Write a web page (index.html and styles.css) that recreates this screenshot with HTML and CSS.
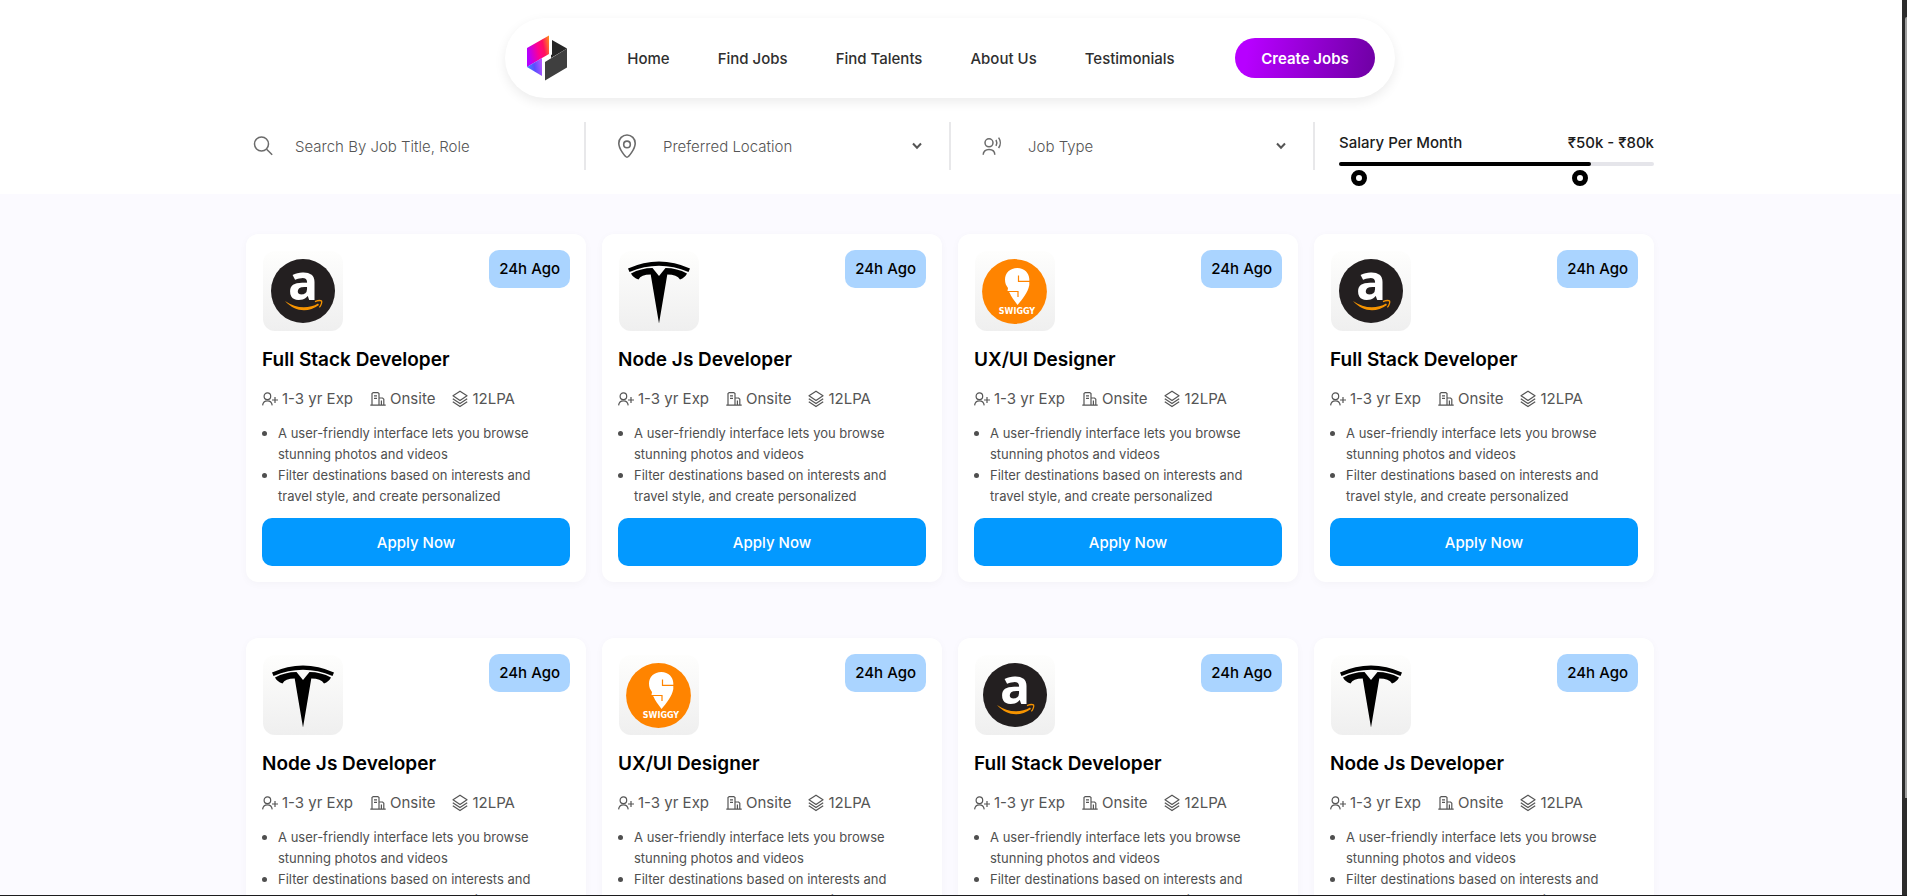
FILE: index.html
```html
<!DOCTYPE html>
<html lang="en">
<head>
<meta charset="utf-8">
<meta name="viewport" content="width=device-width, initial-scale=1">
<title>Find Jobs</title>
<link rel="stylesheet" href="styles.css">
</head>
<body>
<svg class="sprite" aria-hidden="true">
  <symbol id="i-exp" viewBox="0 0 16 16">
    <g fill="none" stroke="currentColor" stroke-width="1.2"><circle cx="5.4" cy="5.2" r="3.3"/><path d="M.6 14.4c.3-3 2-4.600 4.800-4.600s4.500 1.600 4.800 4.600M13 6v6M10 9h6"/></g>
  </symbol>
  <symbol id="i-site" viewBox="0 0 16 16">
    <g fill="none" stroke="currentColor" stroke-width="1.200"><path d="M.3 14.200h15.400M2 14V2.600L3.200 1.600h4.600L9 2.600V14M9 7h3.600l1.200 1.200V14M4 4.800h3M4 7.400h3M11.400 9.500v4.500"/></g>
  </symbol>
  <symbol id="i-pay" viewBox="0 0 16 18">
    <g fill="none" stroke="currentColor" stroke-width="1.200" stroke-linejoin="round"><path d="M8 1.200 15 5.800 8 10.400 1 5.800ZM.8 8.800 8 13.600l7.200-4.800M.8 11.800 8 16.600l7.200-4.800"/></g>
  </symbol>
  <symbol id="i-down" viewBox="0 0 10 8"><path d="M1 1.500 5 5.800 9 1.500" fill="none" stroke="currentColor" stroke-width="2"/></symbol>
</svg>
<div class="window">
  <div class="page">
    <header class="top">
      <nav class="nav" aria-label="Main">
        <svg class="nav-logo" viewBox="0 0 40 46" role="img" aria-label="Logo">
          <defs>
            <linearGradient id="g-warm" x1="0" y1="0.4" x2="1" y2="0.1">
              <stop offset="0" stop-color="#b400ff"/><stop offset="0.45" stop-color="#ff0090"/><stop offset="0.7" stop-color="#ff1060"/><stop offset="1" stop-color="#ff8a1c"/>
            </linearGradient>
            <linearGradient id="g-cool" x1="0" y1="0.6" x2="1" y2="0.4">
              <stop offset="0" stop-color="#3f8cff"/><stop offset="0.5" stop-color="#5a4cff"/><stop offset="1" stop-color="#b455ff"/>
            </linearGradient>
          </defs>
          <path d="M0 13 22 .5V19L15 23 0 32Z" fill="url(#g-warm)"/>
          <path d="M0 32 15 23V41Z" fill="url(#g-cool)"/>
          <path d="M25 5 40 13.500 24 23V20L25 19.500Z" fill="#262626"/>
          <path d="M40 13.500V32.500L18 45.500V27Z" fill="#3f3f3f"/>
        </svg>
        <div class="nav-links">
          <a href="#">Home</a><a href="#">Find Jobs</a><a href="#">Find Talents</a><a href="#">About Us</a><a href="#">Testimonials</a>
        </div>
        <button class="create" type="button">Create Jobs</button>
      </nav>
      <form class="filters">
        <label class="filter">
          <svg class="f-icon" viewBox="0 0 24 24" aria-hidden="true"><g fill="none" stroke="currentColor" stroke-width="1.500"><circle cx="10.500" cy="10" r="7"/><path d="m15.600 15.200 5.600 5.600"/></g></svg>
          <input class="f-text" type="text" placeholder="Search By Job Title, Role" aria-label="Search By Job Title, Role">
        </label>
        <label class="filter">
          <svg class="f-icon" viewBox="0 0 24 24" aria-hidden="true"><g fill="none" stroke="currentColor" stroke-width="1.600"><path d="M12 23.200C10.500 23.200 3.800 15 3.800 9.200a8.200 8.200 0 0 1 16.400 0C20.200 15 13.500 23.200 12 23.200Z"/><circle cx="12" cy="10.400" r="3.300"/></g></svg>
          <select class="f-text" aria-label="Preferred Location"><option>Preferred Location</option></select>
          <svg class="f-arrow" aria-hidden="true"><use href="#i-down"/></svg>
        </label>
        <label class="filter">
          <svg class="f-icon" viewBox="0 0 24 24" aria-hidden="true"><g fill="none" stroke="currentColor" stroke-width="1.500"><circle cx="9" cy="8.800" r="4"/><path d="M3.200 20.800c0-3.500 2.400-5.300 5.800-5.300s5.800 1.800 5.800 5.300M16 5.800c1 1.800 1 4.200 0 6M18.600 3.600c2.200 3 2.200 7.400 0 10.400"/></g></svg>
          <select class="f-text" aria-label="Job Type"><option>Job Type</option></select>
          <svg class="f-arrow" aria-hidden="true"><use href="#i-down"/></svg>
        </label>
        <div class="salary">
          <div class="salary-head"><span>Salary Per Month</span><span>₹50k - ₹80k</span></div>
          <div class="track"><div class="fill"></div></div>
          <div class="thumbs">
            <input type="range" min="0" max="100" value="4" aria-label="Minimum salary">
            <input type="range" min="0" max="100" value="78" aria-label="Maximum salary">
          </div>
        </div>
      </form>
    </header>
    <main class="jobs" id="jobs"></main>
  </div>
  <div class="scrollbar" aria-hidden="true"><div class="scroll-thumb"></div></div>
</div>
<script src="jobs.js"></script>
</body>
</html>
```
FILE: jobs.js
```js
const brands = {
  amazon: {
    role: "Full Stack Developer",
    logo: `<circle cx="40" cy="40" r="32" fill="#231f20"/>
      <text class="logo-a" x="40" y="49" text-anchor="middle">a</text>
      <path d="M22 50C33 58 46 58 55 52.500L56 54C45 62 32 61 22 50Z" fill="#f79400"/>
      <path d="M52 50.600c3-1.400 6-1.200 6.600-.6.500.8-.2 4.200-2.200 6.400" fill="none" stroke="#f79400" stroke-width="1.300"/>`
  },
  tesla: {
    role: "Node Js Developer",
    logo: `<path d="M9 17.500Q40 3.500 71 17.500L69.500 21Q40 8.500 10.500 21Z"/>
      <path d="M12 22.500Q22 17 33.500 17L40 25 46.500 17Q58 17 68 22.500 66 26.500 61 28.500 58 23.500 48.300 23.500L40 72.500 31.700 23.500Q22 23.500 19.500 28.500 14 26.500 12 22.500Z"/>`
  },
  swiggy: {
    role: "UX/UI Designer",
    logo: `<circle cx="39.500" cy="40.500" r="32.400" fill="#ff8400"/>
      <path d="M42.500 54C39 49 36 45.500 34.500 41.500L32.500 40 33 37C31 34.500 30 32 30 28.500 30 22 35 17 42.300 17S54 22 54.300 28V34C53 41.500 47.500 48 42.500 54Z" fill="#fff"/>
      <path d="M43.500 24.500V30.300H56M32 40.500H43V46" fill="none" stroke="#ff8400" stroke-width="1.200"/>
      <text class="logo-word" x="42" y="63" text-anchor="middle">SWIGGY</text>`
  }
};
const order = ["amazon", "tesla", "swiggy", "amazon", "tesla", "swiggy", "amazon", "tesla"];

document.getElementById("jobs").innerHTML = order.map((name) => `
  <article class="card">
    <div class="card-top">
      <svg class="tile" viewBox="0 0 80 80" role="img" aria-label="${name}">${brands[name].logo}</svg>
      <span class="age">24h Ago</span>
    </div>
    <h2 class="role">${brands[name].role}</h2>
    <div class="meta">
      <span><svg aria-hidden="true"><use href="#i-exp"/></svg>1-3 yr Exp</span>
      <span><svg aria-hidden="true"><use href="#i-site"/></svg>Onsite</span>
      <span><svg class="tall" aria-hidden="true"><use href="#i-pay"/></svg>12LPA</span>
    </div>
    <ul class="points">
      <li>A user-friendly interface lets you browse stunning photos and videos</li>
      <li>Filter destinations based on interests and travel style, and create personalized</li>
    </ul>
    <button class="apply" type="button">Apply Now</button>
  </article>`).join("");
```
FILE: styles.css
```css
*, *::before, *::after { box-sizing: border-box; }
body { margin: 0; font-family: Inter, "Noto Sans", sans-serif; font-size: 15px; color: #000; }
button, input, select { font: inherit; }
.sprite { display: none; }

.window { display: flex; height: 100vh; overflow: hidden; border-bottom: 1px solid #1c1c1e; background: #fbfaff; }
.page { flex: 1; min-width: 0; }
.scrollbar { width: 5px; padding: 17px 0 0 3px; background: #2c2c2c; }
.scroll-thumb { height: 89%; background: #9f9f9f; border-radius: 2px 0 0 0; }

.top { padding: 18px 2px 24px 0; background: #fff; }
.nav { display: flex; align-items: center; justify-content: space-between; width: 890px; max-width: 100%; height: 80px; margin: 0 auto; padding: 0 20px 0 22px; border-radius: 40px; background: #fff; box-shadow: 0 4px 12px rgba(0, 0, 0, 0.08); }
.nav-logo { width: 40px; height: 46px; }
.nav-links { display: flex; gap: 48px; padding-top: 2px; }
.nav-links a { color: #2f2f2f; font-weight: 500; line-height: 24px; text-decoration: none; }
.create { width: 140px; height: 40px; padding: 0; border: 0; border-radius: 20px; background: linear-gradient(100deg, #b700ff 10%, #7200a8 95%); color: #fff; font-weight: 600; }

.filters { display: grid; grid-template-columns: 340fr 365fr 364fr 339fr; max-width: 1408px; margin: 24px auto 0; }
.filter { display: flex; align-items: center; height: 48px; padding: 0 24px 0 29px; border-right: 2px solid #e8e8ea; color: #6b6b6b; }
.filter:first-child { padding-left: 5px; }
.f-icon { flex: none; width: 24px; height: 24px; margin-right: 24px; }
.f-text { flex: 1; min-width: 0; width: 100%; height: 40px; padding: 0; border: 0; outline: 0; appearance: none; background: transparent; color: #555; font-weight: 300; }
.filter:first-child .f-icon { margin-right: 20px; }
.f-text::placeholder { color: #555; opacity: 1; }
.f-arrow { flex: none; width: 10px; height: 8px; margin-right: 3px; color: #555; }

.salary { padding: 9px 0 0 24px; }
.salary-head { display: flex; justify-content: space-between; color: #1c1c1c; font-weight: 500; line-height: 24px; }
.track { height: 4px; margin-top: 7px; border-radius: 2px; background: #e5e5ea; }
.fill { width: 80%; height: 4px; border-radius: 2px; background: #000; }
.thumbs { display: grid; height: 4px; padding-top: 4px; }
.thumbs input { grid-area: 1 / 1; width: 100%; height: 16px; margin: 0; appearance: none; background: transparent; pointer-events: none; }
.thumbs input::-webkit-slider-thumb { width: 16px; height: 16px; appearance: none; border: 5px solid #000; border-radius: 50%; background: #fff; pointer-events: auto; }

.jobs { display: grid; grid-template-columns: repeat(4, 1fr); gap: 56px 16px; max-width: 1410px; margin: 0 auto; padding: 40px 2px 40px 0; }
.card { padding: 16px; border-radius: 12px; background: #fff; box-shadow: 0 2px 8px rgba(0, 0, 0, 0.03); }
.card-top { display: flex; align-items: flex-start; justify-content: space-between; }
.tile { width: 80px; height: 80px; margin: 1px; overflow: visible; border-radius: 12px; background: linear-gradient(#fefefd, #efefef); }
.logo-a { font: 700 50px "Open Sans", sans-serif; fill: #fff; }
.logo-word { font: 700 8px "DejaVu Sans", sans-serif; fill: #fff; }
.age { padding: 7px 10px; border-radius: 10px; background: #aad4ff; font-weight: 500; line-height: 24px; }
.role { margin: 12px 0 0; font-size: 19px; font-weight: 600; line-height: 32px; }
.meta { display: flex; gap: 17px; margin-top: 11px; color: #555; line-height: 24px; }
.meta span { display: flex; align-items: center; gap: 4px; }
.meta svg { width: 16px; height: 16px; }
.meta .tall { height: 18px; }
.points { margin: 12px 0 0; padding: 0 24px 0 0; color: #4f4f4f; font-size: 13px; line-height: 21px; list-style: none; }
.points li { display: flex; gap: 11px; }
.points li::before { content: ""; flex: none; width: 5px; height: 5px; margin-top: 8px; border-radius: 50%; background: #4f4f4f; }
.apply { display: block; width: 100%; height: 48px; margin-top: 11px; border: 0; border-radius: 10px; background: #0399ff; color: #fff; font-weight: 500; }
```
